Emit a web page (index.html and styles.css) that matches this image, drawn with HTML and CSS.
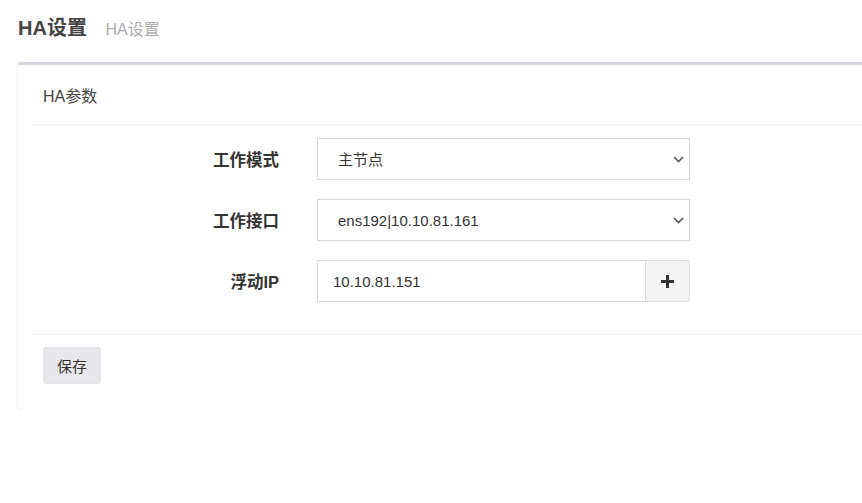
FILE: index.html
```html
<!DOCTYPE html>
<html lang="zh-CN">
  <head>
    <meta charset="UTF-8" />
    <meta name="viewport" content="width=device-width, initial-scale=1.0" />
    <title>HA设置</title>
    <link rel="stylesheet" href="styles.css">
  </head>
  <body>
    <section class="content-header">
      <h1>HA设置 <small>HA设置</small></h1>
    </section>

    <section class="content">
      <div class="box">
        <div class="box-header">
          <h3 class="box-title">HA参数</h3>
        </div>

        <div class="box-body">
          <div class="form-group">
            <label for="mode">工作模式</label>
            <div class="select-wrap">
              <select id="mode" name="mode">
                <option value="master">主节点</option>
                <option value="backup">备节点</option>
              </select>
              <svg class="caret" width="11" height="7" viewBox="0 0 11 7">
                <path d="M1 1l4.5 4.5L10 1" fill="none" stroke="#555" stroke-width="1.6" />
              </svg>
            </div>
          </div>

          <div class="form-group">
            <label for="iface">工作接口</label>
            <div class="select-wrap">
              <select id="iface" name="iface">
                <option value="ens192">ens192|10.10.81.161</option>
              </select>
              <svg class="caret" width="11" height="7" viewBox="0 0 11 7">
                <path d="M1 1l4.5 4.5L10 1" fill="none" stroke="#555" stroke-width="1.6" />
              </svg>
            </div>
          </div>

          <div class="form-group">
            <label for="vip">浮动IP</label>
            <div class="input-group">
              <input type="text" id="vip" name="vip" value="10.10.81.151" />
              <button class="btn-add" type="button" title="添加">
                <svg width="13" height="13" viewBox="0 0 13 13">
                  <rect x="5" y="0" width="3" height="13" fill="#333" />
                  <rect x="0" y="5" width="13" height="3" fill="#333" />
                </svg>
              </button>
            </div>
          </div>
        </div>

        <div class="box-footer">
          <button class="btn" type="button">保存</button>
        </div>
      </div>
    </section>
  </body>
</html>
```

FILE: styles.css
```css
html,
body {
  margin: 0;
  overflow: hidden;
}
body {
  font-family: "Liberation Sans", "Noto Sans CJK SC", sans-serif;
  font-size: 15px;
  color: #333;
  background: #fff;
}
.content-header {
  padding: 15px 0 0 18px;
}
.content-header h1 {
  margin: 0;
  font-size: 20px;
  line-height: 26px;
  font-weight: bold;
  color: #444;
}
.content-header small {
  margin-left: 13px;
  font-size: 16px;
  font-weight: normal;
  color: #ababab;
}
.content {
  padding: 19px 0 0 18px;
}
.box {
  margin-right: -30px;
  background: #fff;
  border-top: 3px solid #d2d6de;
  border-radius: 3px;
  box-shadow: 0 1px 2px rgba(0, 0, 0, 0.16), 0 0 1px rgba(0, 0, 0, 0.12);
  padding: 0 12px;
}
.box-header {
  height: 59px;
  display: flex;
  align-items: center;
  padding-left: 13px;
  border-bottom: 1px solid #f2f2f2;
}
.box-title {
  margin: 0;
  font-size: 16px;
  font-weight: normal;
  color: #444;
}
.box-body {
  padding: 13px 0 13px;
}
.form-group {
  display: grid;
  grid-template-columns: 249px 373px;
  column-gap: 38px;
  align-items: center;
  margin-bottom: 19px;
}
.form-group label {
  text-align: right;
  font-size: 16.5px;
  font-weight: bold;
  color: #333;
}
select,
input {
  box-sizing: border-box;
  height: 42px;
  border: 1px solid #d2d6de;
  border-radius: 0;
  background: #fff;
  font-family: inherit;
  font-size: 15px;
  color: #333;
  outline: none;
}
.select-wrap {
  position: relative;
}
select {
  width: 100%;
  appearance: none;
  -webkit-appearance: none;
  padding: 0 30px 0 20px;
}
.caret {
  position: absolute;
  right: 6px;
  top: 18px;
  pointer-events: none;
}
.input-group {
  display: flex;
}
.input-group input {
  flex: 1;
  min-width: 0;
  padding: 0 15px;
}
.btn-add {
  box-sizing: border-box;
  width: 44px;
  height: 42px;
  display: flex;
  align-items: center;
  justify-content: center;
  background: #f4f4f4;
  border: 1px solid #ddd;
  border-left: none;
  border-radius: 0 3px 3px 0;
  padding: 0;
}
.box-footer {
  border-top: 1px solid #f2f2f2;
  padding: 12px 0 25px 13px;
}
.btn {
  height: 37px;
  padding: 0 13px;
  background: #e8e8ec;
  border: 1px solid #e4e4e8;
  border-radius: 3px;
  font-family: inherit;
  font-size: 15px;
  color: #333;
}
```
